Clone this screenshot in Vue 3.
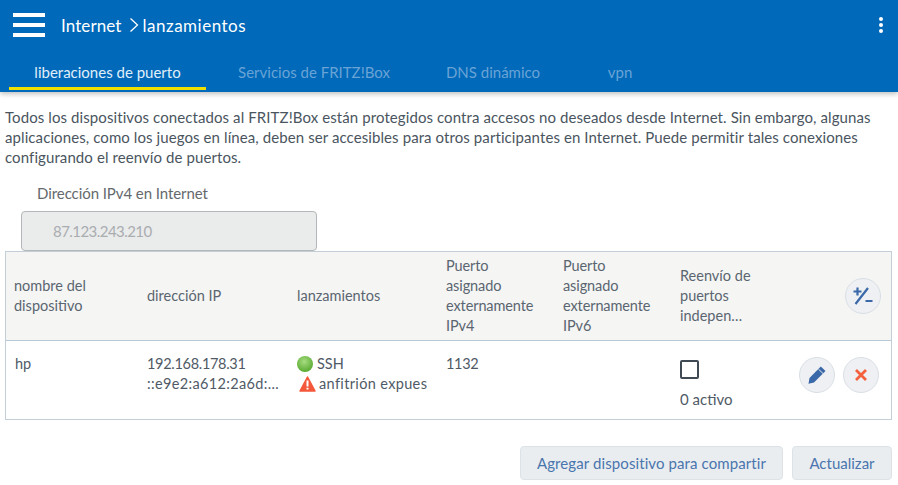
<script setup>
const tabs = [
  { label: 'liberaciones de puerto', active: true },
  { label: 'Servicios de FRITZ!Box' },
  { label: 'DNS dinámico' },
  { label: 'vpn' }
]
</script>

<template>
  <div class="page">
    <header class="head">
      <div class="top">
        <div class="burger"><i></i><i></i><i></i></div>
        <div class="crumb">Internet<svg class="chev" width="10" height="16" viewBox="0 0 10 16"><path d="M1.5 1.5 8.500 8 1.5 14.500" fill="none" stroke="#fff" stroke-width="1.300"/></svg><span class="leaf">lanzamientos</span></div>
        <div class="dots"><i></i><i></i><i></i></div>
      </div>
      <nav class="tabs">
        <div v-for="t in tabs" :key="t.label" class="tab" :class="{ on: t.active }">{{ t.label }}</div>
      </nav>
    </header>

    <main class="main">
      <p class="intro">Todos los dispositivos conectados al FRITZ!Box están protegidos contra accesos no deseados desde Internet. Sin embargo, algunas aplicaciones, como los juegos en línea, deben ser accesibles para otros participantes en Internet. Puede permitir tales conexiones configurando el reenvío de puertos.</p>
      <div class="field">
        <label class="flabel">Dirección IPv4 en Internet</label>
        <div class="finput">87.123.243.210</div>
      </div>

      <section class="table">
        <div class="row thead">
          <div class="c c1">nombre del dispositivo</div>
          <div class="c c2">dirección IP</div>
          <div class="c c3">lanzamientos</div>
          <div class="c c4">Puerto asignado externamente IPv4</div>
          <div class="c c5">Puerto asignado externamente IPv6</div>
          <div class="c c6">Reenvío de puertos indepen…</div>
          <div class="c c7">
            <button class="round">
              <svg width="22" height="22" viewBox="0 0 22 22"><path d="M1.500 6.500h8M5.500 2.500v8M3.500 19 16 3M13.500 16h7" fill="none" stroke="#3a68a8" stroke-width="2.200"/></svg>
            </button>
          </div>
        </div>
        <div class="row tbody">
          <div class="c c1 hp">hp</div>
          <div class="c c2"><div class="num">192.168.178.31</div><div class="clip">::e9e2:a612:2a6d:…</div></div>
          <div class="c c3">
            <div class="line"><span class="led"></span>SSH</div>
            <div class="line clipcut"><svg class="warn" width="17" height="16" viewBox="0 0 17 16"><path d="M8.500 1 16 15H1Z" fill="#f4583a" stroke="#f4583a" stroke-width="1.500" stroke-linejoin="round"/><path d="M8.500 4.500v6M8.500 11.700v1.800" stroke="#fff" stroke-width="2"/></svg>anfitrión expuesto</div>
          </div>
          <div class="c c4 num">1132</div>
          <div class="c c5"></div>
          <div class="c c6"><span class="check"></span><div class="count">0 activo</div></div>
          <div class="c c7 acts">
            <button class="round">
              <svg width="20" height="20" viewBox="0 0 20 20"><path d="M13.800 1.500 18.500 6 7 17.500 1.500 18.700 2.500 13Z" fill="#3a68a8"/><path d="M11.500 4.200l4.500 4.300" stroke="#edf0f3" stroke-width="1"/></svg>
            </button>
            <button class="round">
              <svg width="14" height="14" viewBox="0 0 14 14"><path d="M2 2 12 12M12 2 2 12" stroke="#f4613f" stroke-width="2.800"/></svg>
            </button>
          </div>
        </div>
      </section>

      <div class="btns">
        <button class="btn wide">Agregar dispositivo para compartir</button>
        <button class="btn">Actualizar</button>
      </div>
    </main>
  </div>
</template>

<style>
html, body { margin: 0; background: #fff; }
</style>

<style scoped>
.page { width: 898px; height: 485px; overflow: hidden; font-family: "Lato", "Liberation Sans", sans-serif; font-size: 15px; color: #4f5a66; }
.head { height: 92px; background: #0069b9; box-shadow: 0 2px 5px rgba(0,0,0,.25); display: flex; flex-direction: column; position: relative; }
.top { height: 50px; display: flex; align-items: center; color: #fff; }
.burger { width: 32px; margin: 0 16px 0 13px; display: flex; flex-direction: column; gap: 6px; }
.burger i { display: block; height: 4px; background: #fff; }
.crumb { font-size: 17px; flex: 1; display: flex; align-items: center; letter-spacing: .1px; }
.leaf { letter-spacing: .5px; }
.chev { margin: 0 4px 0 7px; }
.dots { display: flex; flex-direction: column; gap: 2px; margin-right: 15px; }
.dots i { width: 4px; height: 4px; border-radius: 50%; background: #fff; }
.tabs { display: flex; height: 42px; padding-left: 9px; }
.tab { height: 40px; line-height: 44px; text-align: center; color: #6aa3d6; font-size: 15px; width: 197px; }
.tab.on { color: #e1effa; border-bottom: 3px solid #f0e000; height: 37px; }
.tab:nth-child(2) { width: 212px; margin-left: 2px; }
.tab:nth-child(3) { width: 140px; margin-left: 3px; }
.tab:nth-child(4) { width: 60px; margin-left: 27px; }
.main { padding: 15px 6px 0 5px; }
.intro { margin: 0; line-height: 20px; color: #4a5560; letter-spacing: .09px; }
.field { margin-top: 16px; }
.flabel { display: block; margin-left: 32px; line-height: 20px; color: #65696c; letter-spacing: -.07px; }
.finput { margin: 8px 0 0 16px; width: 294px; height: 38px; line-height: 38px; background: #eaebeb; border: 1px solid #b3b7ba; border-radius: 4px; color: #a9adb0; text-indent: 31px; letter-spacing: -.55px; }
.table { border: 1px solid #c4ced6; font-size: 14.5px; }
.row { display: grid; grid-template-columns: 133px 150px 149px 117px 117px 1fr 100px; }
.thead { box-sizing: border-box; height: 89px; padding-bottom: 1px; background: #f5f5f4; border-bottom: 1px solid #b9c8d6; align-items: center; }
.tbody { height: 78px; }
.c { padding-left: 8px; line-height: 20px; min-width: 0; }
.thead .c { color: #5a6570; }
.tbody .c { padding-top: 13px; }
.hp { padding-left: 9px; }
.num { letter-spacing: -.3px; }
.thead .c4, .thead .c5 { padding-right: 18px; letter-spacing: -.1px; }
.c6 { padding-right: 20px; }
.clip { white-space: nowrap; overflow: hidden; letter-spacing: .35px; }
.line { display: flex; align-items: center; white-space: nowrap; height: 20px; }
.clipcut { overflow: hidden; max-width: 130px; letter-spacing: .35px; }
.led { width: 16px; height: 16px; border-radius: 50%; margin-right: 4px; background: radial-gradient(circle at 45% 35%, #a6dc80, #5fae38 70%, #4c9a2e); }
.warn { margin: 0 3px 0 2px; flex: none; }
.check { display: block; width: 15px; height: 15px; border: 2px solid #3f4a55; border-radius: 2px; margin-top: 6px; }
.count { margin-top: 10px; font-size: 15px; }
.c7 { padding: 0; display: flex; justify-content: flex-end; align-items: center; padding-right: 10px; }
.acts { align-items: flex-start; gap: 8px; padding-right: 12px; }
.tbody .acts { padding-top: 16px; }
.round { width: 36px; height: 36px; border-radius: 50%; border: 1px solid #d9dfe5; background: #eef0f3; display: flex; align-items: center; justify-content: center; padding: 0; }
.btns { display: flex; justify-content: flex-end; gap: 9px; margin-top: 26px; }
.btn { height: 34px; width: 100px; border: 1px solid #dde2e7; border-radius: 4px; background: #e9edf0; color: #4a75ad; font: inherit; padding: 0; }
.wide { width: 263px; letter-spacing: .1px; }
</style>
